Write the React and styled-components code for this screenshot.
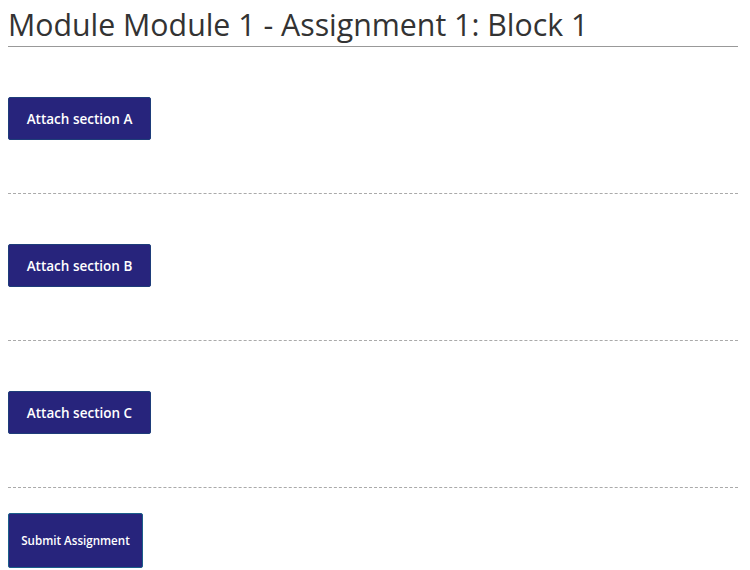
import React from "react";
import styled, { createGlobalStyle } from "styled-components";

const Global = createGlobalStyle`
  body {
    margin: 8px;
    background: #fff;
    font-family: "Open Sans", "Noto Sans", sans-serif;
  }
`;

function App() {
  const sections = ["A", "B", "C"];
  return (
    <Page>
      <Global />
      <Title>Module Module 1 - Assignment 1: Block 1</Title>
      {sections.map((s) => (
        <Section key={s}>
          <AttachButton>Attach section {s}</AttachButton>
        </Section>
      ))}
      <SubmitButton>Submit Assignment</SubmitButton>
    </Page>
  );
}

export default App;

const Page = styled.div`
  width: 730px;
`;

const Title = styled.h1`
  margin: 0;
  padding: 0;
  font-size: 30.3px;
  font-weight: 400;
  line-height: 34px;
  color: #333;
  border-bottom: 1px solid #999;
  height: 38px;
`;

const Section = styled.div`
  padding: 50px 0 53px;
  border-bottom: 1px dashed #aaa;
`;

const AttachButton = styled.button`
  display: block;
  width: 143px;
  height: 43px;
  border: 1px solid #1e3d7a;
  border-radius: 2px;
  background-color: #27247c;
  color: #fff;
  font-family: "Open Sans", "Noto Sans", sans-serif;
  font-size: 13.5px;
  font-weight: 600;
  padding: 0;
  cursor: pointer;
`;

const SubmitButton = styled.button`
  display: block;
  margin-top: 25px;
  width: 135px;
  height: 55px;
  border: 1px solid #1b5f8a;
  border-radius: 2px;
  background-color: #27247c;
  color: #fff;
  font-family: "Open Sans", "Noto Sans", sans-serif;
  font-size: 11.6px;
  font-weight: 600;
  padding: 0;
  cursor: pointer;
`;
